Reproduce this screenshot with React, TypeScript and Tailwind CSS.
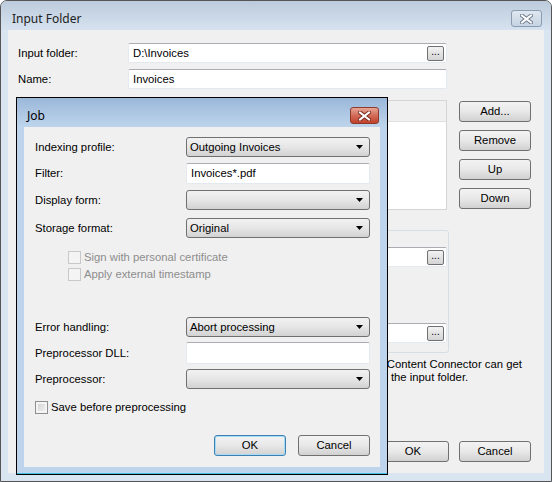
import type { ReactNode } from 'react'

function Arrow() {
  return (
    <svg width="7" height="4" viewBox="0 0 7 4" className="shrink-0">
      <path d="M0 0h7L3.5 4z" fill="#000" />
    </svg>
  )
}

function CloseGlyph({ stroke }: { stroke: string }) {
  return (
    <svg width="13" height="10" viewBox="0 0 13 10">
      <path d="M2 1.5 11 8.5M11 1.5 2 8.5" stroke={stroke} strokeWidth="4" strokeLinecap="square" />
      <path d="M2 1.5 11 8.5M11 1.5 2 8.5" stroke="#fff" strokeWidth="2" strokeLinecap="square" />
    </svg>
  )
}

function Combo({ value, w = 'w-[185px]' }: { value?: string; w?: string }) {
  return (
    <div
      className={`${w} flex h-[20px] items-center justify-between rounded-[3px] border border-[#707070] bg-gradient-to-b from-[#f2f2f2] via-[#e6e6e6] to-[#d2d2d2] pl-[3px] pr-[6px]`}
    >
      <span className="pt-[1px] leading-none">{value}</span>
      <Arrow />
    </div>
  )
}

function TextBox({ value, h = 'h-[21px]', w = 'w-[185px]', children }: { value?: string; h?: string; w?: string; children?: ReactNode }) {
  return (
    <div
      className={`${w} ${h} flex items-center justify-between rounded-[2px] border border-[#e3e9ef] border-t-[#abadb3] bg-white pl-[4px] pr-[2px]`}
    >
      <span className="pt-[1px] leading-none">{value}</span>
      {children}
    </div>
  )
}

function DotsButton() {
  return (
    <div className="flex h-[15px] w-[17px] items-center justify-center rounded-[2px] border border-[#707070] bg-gradient-to-b from-[#f2f2f2] to-[#d4d4d4] pb-[3px] text-[10px] leading-none">
      ...
    </div>
  )
}

function Button({ label, focused = false }: { label: string; focused?: boolean }) {
  return (
    <div
      className={`flex h-[21px] w-[72px] items-center justify-center rounded-[3px] border bg-gradient-to-b from-[#f3f3f3] via-[#e8e8e8] to-[#d1d1d1] ${
        focused ? 'border-[#3c7fb1] shadow-[inset_0_0_0_1px_#a6dcf6]' : 'border-[#707070]'
      }`}
    >
      {label}
    </div>
  )
}

function Check({ label, disabled = false }: { label: string; disabled?: boolean }) {
  return (
    <div className="flex h-[13px] items-center gap-[3px]">
      <div
        className={`h-[13px] w-[13px] border ${
          disabled
            ? 'border-[#c8c8c8] bg-[#f4f4f4]'
            : 'border-[#8e8f8f] bg-gradient-to-br from-[#d0d0d0] to-[#f4f4f4] shadow-[inset_0_0_0_2px_#f4f4f4]'
        }`}
      />
      <span className={disabled ? 'text-[#8d8d8d]' : ''}>{label}</span>
    </div>
  )
}

function Row({ label, children, className = '' }: { label: string; children: ReactNode; className?: string }) {
  return (
    <div className={`flex items-center ${className}`}>
      <span className="w-[151px] shrink-0">{label}</span>
      {children}
    </div>
  )
}

export default function App() {
  return (
    <div className="relative h-[482px] w-[552px] overflow-hidden bg-white font-['Liberation_Sans',Arial,sans-serif] text-[11.3px] text-black">
      {/* Input Folder window (inactive) */}
      <div className="flex h-full flex-col rounded-t-[7px] border border-[#555] bg-[#dae5f2]">
        <div className="flex h-[29px] shrink-0 items-start justify-between rounded-t-[6px] bg-gradient-to-b from-[#bccbdc] to-[#d6e2ef]">
          <span className="pl-[11px] pt-[10px] font-['Noto_Sans',sans-serif] text-[12px] leading-[16px] text-[#222]">Input Folder</span>
          <div className="mr-[9px] mt-[9px] flex h-[17px] w-[31px] items-center justify-center rounded-[3px] border border-[#8b9cb0] bg-gradient-to-b from-[#dfe7f0] to-[#c6d3e2]">
            <CloseGlyph stroke="#6d7b8c" />
          </div>
        </div>

        <div className="mx-[7px] mb-[8px] flex flex-1 flex-col bg-[#f0f0f0] pl-[10px] pr-[13px] pt-[13px]">
          <div className="flex items-center">
            <span className="w-[110px]">Input folder:</span>
            <TextBox value="D:\Invoices" h="h-[20px]" w="w-[319px]">
              <DotsButton />
            </TextBox>
          </div>
          <div className="mt-[6px] flex items-center">
            <span className="w-[110px]">Name:</span>
            <TextBox value="Invoices" h="h-[20px]" w="w-[319px]" />
          </div>

          <div className="mt-[11px] flex">
            <div className="flex h-[110px] w-[429px] flex-col border border-[#d5d5d5] bg-white">
              <div className="h-[21px] border-b border-[#e0e0e0] bg-[#f0f0f0]" />
            </div>
            <div className="ml-[12px] mt-[1px] flex flex-col gap-[8px]">
              <Button label="Add..." />
              <Button label="Remove" />
              <Button label="Up" />
              <Button label="Down" />
            </div>
          </div>

          <div className="mt-[20px] h-[123px] w-[431px] rounded-[3px] border border-[#d5dfe5] pr-[2px] pt-[16px]">
            <div className="ml-[110px]">
              <TextBox w="w-[318px]" h="h-[20px]">
                <DotsButton />
              </TextBox>
            </div>
            <div className="ml-[110px] mt-[56px]">
              <TextBox w="w-[318px]" h="h-[20px]">
                <DotsButton />
              </TextBox>
            </div>
          </div>

          <div className="mt-[5px] whitespace-nowrap leading-[13px]">
            <div className="pl-[350px]">the Content Connector can get</div>
            <div className="pl-[361px]">in the input folder.</div>
          </div>

          <div className="mb-[11px] mt-auto flex justify-end gap-[10px]">
            <Button label="OK" />
            <Button label="Cancel" />
          </div>
        </div>
      </div>

      {/* Job dialog (active, lies over the main window) */}
      <div className="absolute left-[16px] top-[97px] flex h-[378px] w-[372px] flex-col border border-black bg-[#bdd4ec] shadow-[inset_0_-1px_0_#3fc0e6]">
        <div className="flex h-[29px] shrink-0 items-start justify-between bg-gradient-to-b from-[#9bb8d9] to-[#bed4ec]">
          <span className="pl-[10px] pt-[10px] font-['Noto_Sans',sans-serif] text-[12px] leading-[16px]">Job</span>
          <div className="mr-[8px] mt-[9px] flex h-[17px] w-[29px] items-center justify-center rounded-[3px] border border-[#8c3a2c] bg-gradient-to-b from-[#e6a595] via-[#d26b58] to-[#c0402c]">
            <CloseGlyph stroke="#7a2a1e" />
          </div>
        </div>

        <div className="mx-[7px] mb-[7px] flex flex-1 flex-col bg-[#f0f0f0] pl-[11px] pr-[10px]">
          <Row label="Indexing profile:" className="mt-[10px]">
            <Combo value="Outgoing Invoices" />
          </Row>
          <Row label="Filter:" className="mt-[6px]">
            <TextBox value="Invoices*.pdf" />
          </Row>
          <Row label="Display form:" className="mt-[6px]">
            <Combo />
          </Row>
          <Row label="Storage format:" className="mt-[8px]">
            <Combo value="Original" />
          </Row>

          <div className="mt-[13px] pl-[33px]">
            <Check label="Sign with personal certificate" disabled />
          </div>
          <div className="mt-[4px] pl-[33px]">
            <Check label="Apply external timestamp" disabled />
          </div>

          <Row label="Error handling:" className="mt-[36px]">
            <Combo value="Abort processing" />
          </Row>
          <Row label="Preprocessor DLL:" className="mt-[5px]">
            <TextBox h="h-[22px]" />
          </Row>
          <Row label="Preprocessor:" className="mt-[5px]">
            <Combo />
          </Row>

          <div className="mt-[12px]">
            <Check label="Save before preprocessing" />
          </div>

          <div className="mt-[21px] flex justify-end gap-[12px]">
            <Button label="OK" focused />
            <Button label="Cancel" />
          </div>
        </div>
      </div>
    </div>
  )
}
